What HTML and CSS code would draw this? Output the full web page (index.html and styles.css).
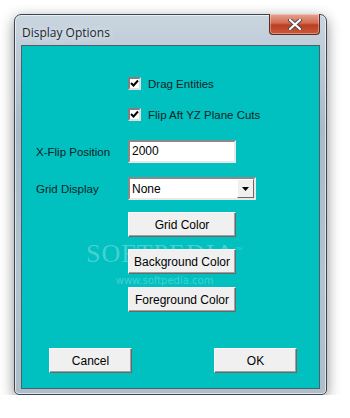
FILE: index.html
```html
<!DOCTYPE html>
<html lang="en">
<head>
    <meta charset="UTF-8">
    <title>Display Options</title>
    <link rel="stylesheet" href="styles.css">
</head>
<body>
    <div class="window">
        <div class="titlebar">
            <span class="title">Display Options</span>
            <button class="close" type="button">
                <svg width="14" height="11" viewBox="0 0 14 11">
                    <path d="M2 1 L12 10 M12 1 L2 10" stroke="#4a4a4a" stroke-width="4" stroke-linecap="round"/>
                    <path d="M2 1 L12 10 M12 1 L2 10" stroke="#ffffff" stroke-width="2.2" stroke-linecap="round"/>
                </svg>
            </button>
        </div>
        <div class="client">
            <div class="watermark">
                <span class="wm-big">SOFTPEDIA<sup>™</sup></span>
                <span class="wm-small">www.softpedia.com</span>
            </div>
            <div class="row first">
                <span class="label"></span>
                <label class="check"><span class="box"><svg width="9" height="9" viewBox="0 0 9 9"><path d="M1 4 L3.5 6.5 L8 1.5" fill="none" stroke="#000" stroke-width="2"/></svg></span>Drag Entities</label>
            </div>
            <div class="row second">
                <span class="label"></span>
                <label class="check"><span class="box"><svg width="9" height="9" viewBox="0 0 9 9"><path d="M1 4 L3.5 6.5 L8 1.5" fill="none" stroke="#000" stroke-width="2"/></svg></span>Flip Aft YZ Plane Cuts</label>
            </div>
            <div class="row field">
                <span class="label">X-Flip Position</span>
                <div class="edit">2000</div>
            </div>
            <div class="row combo-row">
                <span class="label">Grid Display</span>
                <div class="combo">
                    <span class="combo-text">None</span>
                    <span class="combo-btn"><svg width="7" height="4" viewBox="0 0 7 4"><path d="M0 0 H7 L3.5 4 Z" fill="#000"/></svg></span>
                </div>
            </div>
            <div class="row btn-row first-btn">
                <span class="label"></span>
                <button class="btn" type="button">Grid Color</button>
            </div>
            <div class="row btn-row">
                <span class="label"></span>
                <button class="btn" type="button">Background Color</button>
            </div>
            <div class="row btn-row third-btn">
                <span class="label"></span>
                <button class="btn" type="button">Foreground Color</button>
            </div>
            <div class="actions">
                <button class="btn small" type="button">Cancel</button>
                <button class="btn small" type="button">OK</button>
            </div>
        </div>
    </div>
</body>
</html>
```

FILE: styles.css
```css
body {
    margin: 0;
    background: #ffffff;
    font-family: 'Liberation Sans', Arial, sans-serif;
}
.window {
    margin: 14px 0 0 14px;
    width: 313px;
    height: 381px;
    box-sizing: border-box;
    border: 1px solid #3c4650;
    border-radius: 7px 7px 5px 5px;
    background: linear-gradient(to bottom, #c9d5df 0%, #a9bac8 30%, #b4c3d0 70%, #aebdca 100%);
    box-shadow: 0 4px 14px rgba(0, 0, 0, 0.45), inset 0 0 0 1px rgba(255, 255, 255, 0.6);
    padding: 0 6px 5px 6px;
}
.titlebar {
    height: 30px;
    display: flex;
    justify-content: space-between;
    align-items: flex-start;
}
.title {
    font-family: 'Open Sans', 'Noto Sans', sans-serif;
    font-size: 12px;
    color: #1b2630;
    margin: 9px 0 0 1px;
    text-shadow: 0 0 6px rgba(255, 255, 255, 0.9);
}
.close {
    margin: -1px 0 0 0;
    width: 51px;
    height: 21px;
    border: 1px solid #5a2a24;
    border-top: none;
    border-radius: 0 0 4px 4px;
    background: linear-gradient(to bottom, #e6a592 0%, #d36a52 45%, #b93d21 55%, #cc5a3a 100%);
    box-shadow: inset 0 0 0 1px rgba(255, 255, 255, 0.35);
    display: flex;
    justify-content: center;
    align-items: center;
    padding: 0;
}
.client {
    position: relative;
    height: 344px;
    box-sizing: border-box;
    background: #00c0c0;
    border: 1px solid #4d5e6c;
    padding: 0 0 0 14px;
    display: flex;
    flex-direction: column;
    font-size: 11.5px;
    color: #0d2424;
}
.row {
    position: relative;
    display: flex;
    align-items: center;
}
.label {
    width: 92px;
    flex: none;
}
.first {
    margin-top: 31px;
    height: 13px;
}
.second {
    margin-top: 18px;
    height: 13px;
}
.field {
    margin-top: 19px;
    height: 23px;
}
.combo-row {
    margin-top: 14px;
    height: 23px;
}
.btn-row {
    margin-top: 12px;
    height: 25px;
}
.third-btn {
    margin-top: 13px;
}
.check {
    display: flex;
    align-items: center;
    gap: 7px;
}
.box {
    width: 13px;
    height: 13px;
    box-sizing: border-box;
    background: #ffffff;
    border-style: solid;
    border-width: 2px;
    border-color: #808080 #e0e0e0 #e0e0e0 #808080;
    display: flex;
    align-items: center;
    justify-content: center;
}
.edit {
    width: 108px;
    height: 23px;
    box-sizing: border-box;
    background: #ffffff;
    border-style: solid;
    border-width: 2px;
    border-color: #8a8a8a #e8e8e8 #e8e8e8 #8a8a8a;
    padding: 2px 0 0 2px;
    font-size: 12px;
    color: #000;
}
.combo {
    width: 128px;
    height: 23px;
    box-sizing: border-box;
    background: #ffffff;
    border-style: solid;
    border-width: 2px;
    border-color: #8a8a8a #e8e8e8 #e8e8e8 #8a8a8a;
    display: flex;
    justify-content: space-between;
    align-items: stretch;
}
.combo-text {
    padding: 3px 0 0 2px;
    font-size: 12px;
    color: #000;
}
.combo-btn {
    width: 17px;
    box-sizing: border-box;
    background: #f0f0f0;
    border-style: solid;
    border-width: 1px;
    border-color: #ffffff #696969 #696969 #ffffff;
    display: flex;
    align-items: center;
    justify-content: center;
}
.btn {
    width: 108px;
    height: 25px;
    box-sizing: border-box;
    background: #f0f0f0;
    border-style: solid;
    border-width: 1px;
    border-color: #ffffff #696969 #696969 #ffffff;
    box-shadow: inset -1px -1px 0 #a0a0a0;
    font-family: 'Liberation Sans', Arial, sans-serif;
    font-size: 12px;
    color: #000;
    padding: 0;
}
.actions {
    position: relative;
    margin-top: 36px;
    display: flex;
    gap: 82px;
    padding-left: 13px;
}
.small {
    width: 83px;
}
.watermark {
    position: absolute;
    left: 64px;
    top: 193px;
    display: flex;
    flex-direction: column;
    align-items: center;
    pointer-events: none;
}
.wm-big {
    font-family: 'Liberation Serif', serif;
    font-size: 26px;
    letter-spacing: 1px;
    color: rgba(255, 255, 255, 0.28);
}
.wm-big sup {
    font-size: 7px;
    font-family: 'Liberation Sans', sans-serif;
}
.wm-small {
    margin-top: 6px;
    font-family: 'DejaVu Sans', sans-serif;
    font-size: 10px;
    color: rgba(255, 255, 255, 0.28);
}
```
